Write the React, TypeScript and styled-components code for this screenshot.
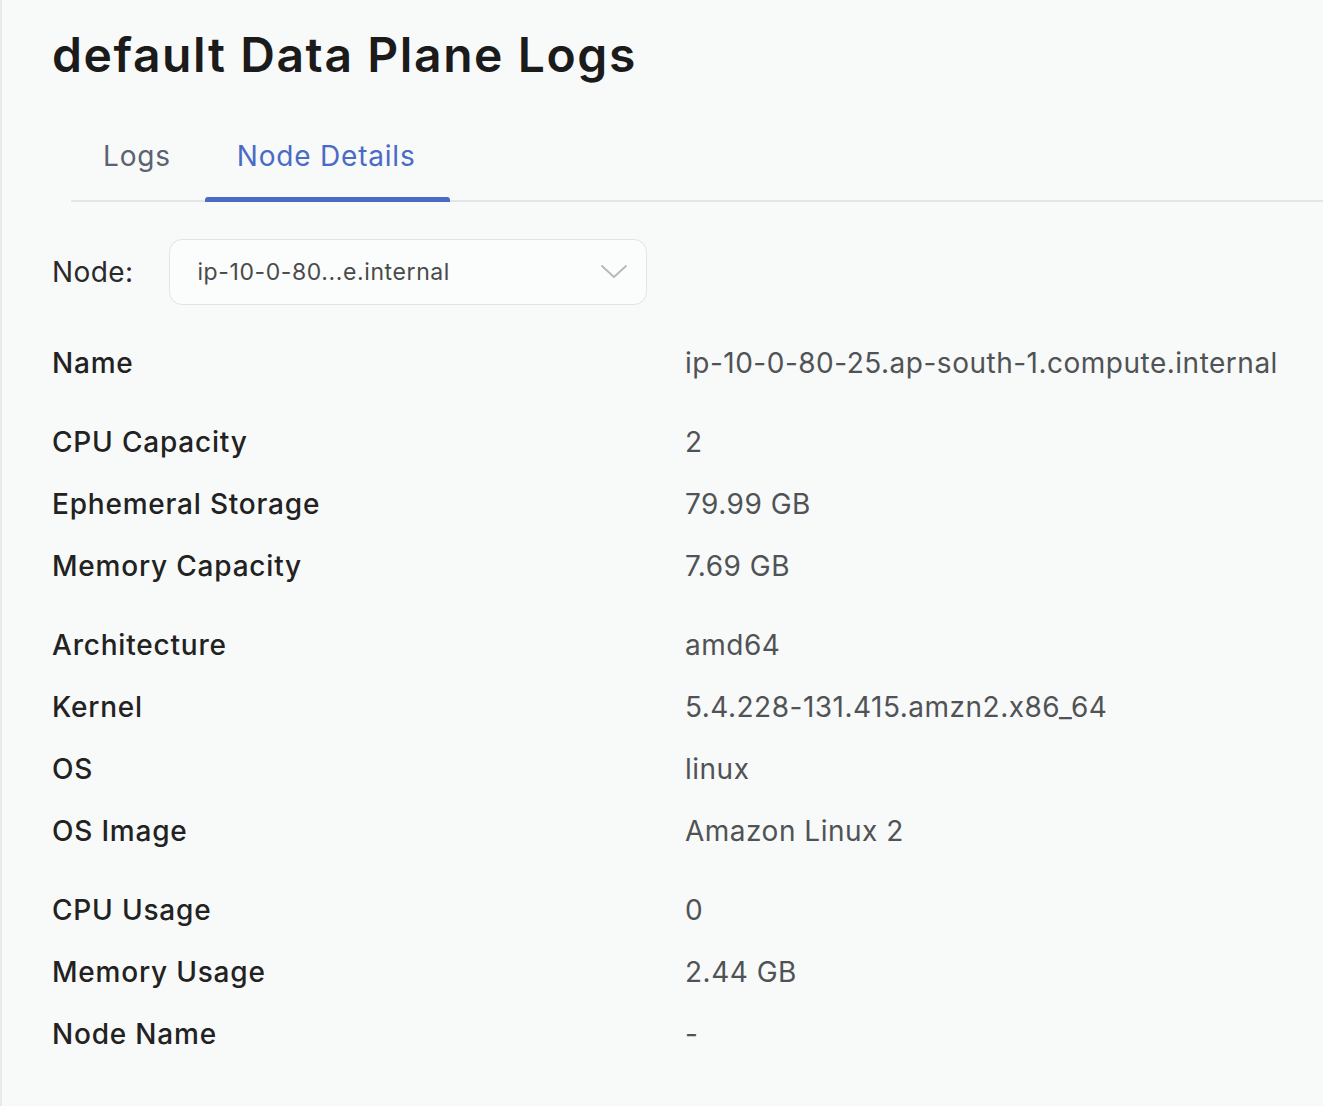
import React from "react";
import styled, { createGlobalStyle } from "styled-components";

const GlobalStyle = createGlobalStyle`
  html, body {
    margin: 0;
    padding: 0;
    background: #f8f9f9;
  }
  body {
    font-family: Inter, "Noto Sans", "Liberation Sans", sans-serif;
    -webkit-font-smoothing: antialiased;
  }
`;

const Page = styled.div`
  min-height: 1106px;
  box-sizing: border-box;
  border-left: 2px solid #e8e9e9;
  padding: 24px 0 0 50px;
`;

const Title = styled.h1`
  margin: 0;
  font-size: 48px;
  line-height: 62px;
  font-weight: 600;
  color: #1b1b1b;
  letter-spacing: 1.6px;
`;

const TabBar = styled.div`
  display: flex;
  margin: 50px 0 0 19px;
  border-bottom: 2px solid #e3e5e7;
`;

const Tab = styled.div<{ active?: boolean }>`
  position: relative;
  padding: 0 34px 24px 32px;
  font-size: 28px;
  line-height: 40px;
  font-weight: 400;
  letter-spacing: 0.8px;
  color: ${(p) => (p.active ? "#4a6bc5" : "#5b6272")};
  &::after {
    content: "";
    display: ${(p) => (p.active ? "block" : "none")};
    position: absolute;
    left: 0;
    right: 0;
    bottom: -2px;
    height: 5px;
    border-radius: 3px 3px 0 0;
    background: #4a6bc5;
  }
`;

const NodeRow = styled.div`
  display: flex;
  align-items: center;
  gap: 36px;
  margin-top: 37px;
`;

const NodeLabel = styled.span`
  font-size: 28px;
  letter-spacing: 0.4px;
  color: #2a2a2a;
  font-weight: 400;
`;

const Select = styled.div`
  width: 478px;
  height: 66px;
  box-sizing: border-box;
  display: flex;
  align-items: center;
  justify-content: space-between;
  padding: 0 18px 0 27px;
  background: #fbfcfc;
  border: 1.5px solid #e2e4e6;
  border-radius: 13px;
  font-size: 23px;
  letter-spacing: 0.6px;
  color: #4a4a4a;
`;

const Details = styled.div`
  display: flex;
  flex-direction: column;
  gap: 17px;
  margin-top: 27px;
`;

const Group = styled.div`
  display: grid;
  grid-template-columns: 633px 1fr;
  grid-auto-rows: 62px;
  align-items: center;
`;

const Label = styled.div`
  font-size: 28px;
  font-weight: 500;
  letter-spacing: 0.8px;
  color: #222;
`;

const Value = styled.div`
  font-size: 28px;
  font-weight: 400;
  letter-spacing: 0.5px;
  color: #505356;
`;

const groups: [string, string][][] = [
  [["Name", "ip-10-0-80-25.ap-south-1.compute.internal"]],
  [
    ["CPU Capacity", "2"],
    ["Ephemeral Storage", "79.99 GB"],
    ["Memory Capacity", "7.69 GB"],
  ],
  [
    ["Architecture", "amd64"],
    ["Kernel", "5.4.228-131.415.amzn2.x86_64"],
    ["OS", "linux"],
    ["OS Image", "Amazon Linux 2"],
  ],
  [
    ["CPU Usage", "0"],
    ["Memory Usage", "2.44 GB"],
    ["Node Name", "-"],
  ],
];

function Chevron() {
  return (
    <svg width="28" height="16" viewBox="0 0 28 16" fill="none">
      <path
        d="M2 2l12 11L26 2"
        stroke="#b4b7bb"
        strokeWidth="1.8"
        strokeLinecap="round"
        strokeLinejoin="round"
      />
    </svg>
  );
}

function App() {
  return (
    <Page>
      <GlobalStyle />
      <Title>default Data Plane Logs</Title>
      <TabBar>
        <Tab>Logs</Tab>
        <Tab active>Node Details</Tab>
      </TabBar>
      <NodeRow>
        <NodeLabel>Node:</NodeLabel>
        <Select>
          <span>ip-10-0-80...e.internal</span>
          <Chevron />
        </Select>
      </NodeRow>
      <Details>
        {groups.map((group, gi) => (
          <Group key={gi}>
            {group.map(([label, value]) => (
              <React.Fragment key={label}>
                <Label>{label}</Label>
                <Value>{value}</Value>
              </React.Fragment>
            ))}
          </Group>
        ))}
      </Details>
    </Page>
  );
}

export default App;
